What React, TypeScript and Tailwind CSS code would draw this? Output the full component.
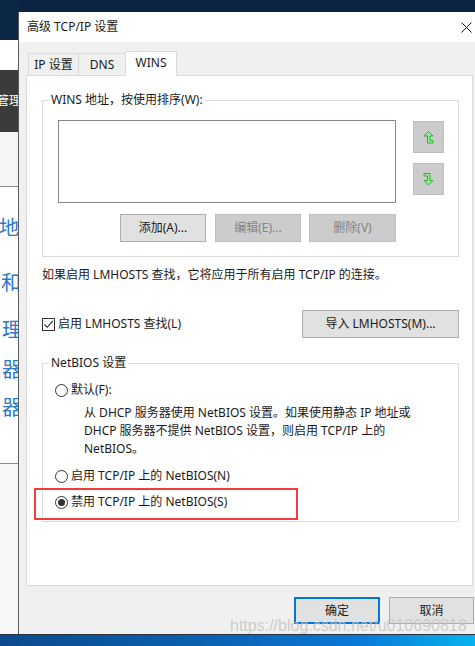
import React from "react";

const font = "font-['Noto_Sans','Noto_Sans_CJK_SC',sans-serif]";

function UpIcon() {
  return (
    <svg width="11" height="13" viewBox="0 0 11 13">
      <path d="M5.5 0.5 L10 5 H7 V9.5 H10 V12 H4.5 V5 H1 Z" fill="#9be89b" stroke="#34b034" strokeWidth="1" strokeLinejoin="miter" />
    </svg>
  );
}

function DownIcon() {
  return (
    <svg width="11" height="13" viewBox="0 0 11 13">
      <path d="M1 0.5 H7 V7.5 H10 L5.5 12 L1 7.5 H4.5 V3 H1 Z" fill="#9be89b" stroke="#34b034" strokeWidth="1" strokeLinejoin="miter" />
    </svg>
  );
}

function Radio({ checked }: { checked?: boolean }) {
  return (
    <span className="flex h-[13px] w-[13px] shrink-0 items-center justify-center rounded-full border border-[#333] bg-white">
      {checked && <span className="h-[7px] w-[7px] rounded-full bg-[#333]" />}
    </span>
  );
}

function Btn({ children, disabled, className = "" }: { children: React.ReactNode; disabled?: boolean; className?: string }) {
  return (
    <div
      className={`flex h-[28px] items-center justify-center border text-[12px] ${
        disabled ? "border-[#bfbfbf] bg-[#cccccc] text-[#838383]" : "border-[#adadad] bg-[#e1e1e1] text-[#1a1a1a]"
      } ${className}`}
    >
      {children}
    </div>
  );
}

function LeftStrip() {
  return (
    <div className="flex w-[18px] shrink-0 flex-col overflow-hidden">
      <div className="h-[40px] bg-[#0d2747]" />
      <div className="h-[30px] bg-white" />
      <div className="flex h-[62px] items-center justify-end bg-[#3b3b3b] text-[12px] whitespace-nowrap text-white">
        <span className="mr-[-3px]">管理</span>
      </div>
      <div className="h-[55px] border-b border-[#8c8c8c] bg-[#f5f5f5]" />
      <div className="flex h-[277px] flex-col border-b border-[#8c8c8c] bg-white pt-[29px] text-[20px] leading-[24px] whitespace-nowrap text-[#2a78c8]">
        <div className="flex h-[24px] justify-end"><span className="mr-[-1px]">地</span></div>
        <div className="mt-[31px] flex h-[24px] justify-end"><span className="mr-[-3px]">和</span></div>
        <div className="mt-[23px] flex h-[24px] justify-end"><span className="mr-[-4px]">理</span></div>
        <div className="mt-[16px] flex h-[24px] justify-end"><span className="mr-[-4px]">器</span></div>
        <div className="mt-[14px] flex h-[24px] justify-end"><span className="mr-[-4px]">器</span></div>
      </div>
      <div className="flex-1 bg-[#f7f7f7]" />
    </div>
  );
}

export default function App() {
  return (
    <div className={`${font} flex h-[646px] w-[475px] flex-col overflow-hidden bg-[#f0f0f0] text-[12px] text-[#1a1a1a]`}>
      <div className="flex min-h-0 flex-1">
        <LeftStrip />
        <div className="flex min-w-0 flex-1 flex-col">
          <div className="h-[12px] bg-[#0c2443]" />
          <div className="flex flex-1 flex-col border-l border-[#5b5b5b]">
            {/* title bar */}
            <div className="flex h-[30px] items-center justify-between bg-white pl-[8px] pr-[3px]">
              <span className="text-[12px] leading-[16px]">高级 TCP/IP 设置</span>
              <svg width="11" height="11" viewBox="0 0 11 11">
                <path d="M0.5 0.5 L10.5 10.5 M10.5 0.5 L0.5 10.5" stroke="#111" strokeWidth="1" />
              </svg>
            </div>

            {/* body */}
            <div className="relative flex flex-1 flex-col bg-[#f0f0f0] pl-[7px] pt-[9px]">
              {/* tabs */}
              <div className="flex h-[24px] items-end pl-[2px]">
                <div className="flex h-[22px] w-[50px] items-center justify-center border-t border-l border-[#d9d9d9] leading-[16px]">IP 设置</div>
                <div className="flex h-[22px] w-[47px] items-center justify-center border-t border-l border-[#d9d9d9] leading-[16px]">DNS</div>
                <div className="relative z-10 -mb-px flex h-[25px] w-[52px] items-center justify-center border-x border-t border-[#d9d9d9] bg-white pb-[3px] leading-[16px]">WINS</div>
              </div>

              {/* panel */}
              <div className="relative flex h-[511px] w-[447px] flex-col border border-[#d9d9d9] bg-white">
                <fieldset className="ml-[15px] mt-[16px] w-[417px] border border-[#dcdcdc] px-0 pb-[14px]">
                  <legend className="ml-[6px] px-[2px] leading-[16px]">WINS 地址，按使用排序(W):</legend>
                  <div className="mt-[12px] flex pl-[15px]">
                    <div className="h-[83px] w-[338px] border border-[#828790] bg-white" />
                    <div className="ml-[17px] flex flex-col gap-[10px] pt-px">
                      <div className="flex h-[32px] w-[31px] items-center justify-center border border-[#bfbfbf] bg-[#cccccc]">
                        <UpIcon />
                      </div>
                      <div className="flex h-[32px] w-[31px] items-center justify-center border border-[#bfbfbf] bg-[#cccccc]">
                        <DownIcon />
                      </div>
                    </div>
                  </div>
                  <div className="mt-[11px] flex w-[353px] justify-end pl-[15px]">
                    <Btn className="w-[86px]">添加(A)...</Btn>
                    <Btn disabled className="ml-[9px] w-[86px]">编辑(E)...</Btn>
                    <Btn disabled className="ml-[8px] w-[87px]">删除(V)</Btn>
                  </div>
                </fieldset>

                <div className="ml-[15px] mt-[10px] leading-[16px]">如果启用 LMHOSTS 查找，它将应用于所有启用 TCP/IP 的连接。</div>

                <div className="ml-[15px] mt-[27px] flex w-[417px] items-center justify-between">
                  <div className="flex items-center gap-[3px]">
                    <span className="flex h-[13px] w-[13px] items-center justify-center border border-[#333] bg-white">
                      <svg width="11" height="11" viewBox="0 0 11 11">
                        <path d="M1.5 5.5 L4.2 8.3 L9.8 1.8" fill="none" stroke="#222" strokeWidth="1.1" />
                      </svg>
                    </span>
                    <span className="leading-[16px]">启用 LMHOSTS 查找(L)</span>
                  </div>
                  <Btn className="w-[157px]">导入 LMHOSTS(M)...</Btn>
                </div>

                <fieldset className="ml-[15px] mt-[17px] w-[417px] border border-[#dcdcdc] px-0 pb-[10px]">
                  <legend className="ml-[6px] px-[2px] leading-[16px]">NetBIOS 设置</legend>
                  <div className="mt-[10px] flex flex-col pl-[12px]">
                    <div className="flex h-[18px] items-center gap-[3px]">
                      <Radio />
                      <span>默认(F):</span>
                    </div>
                    <div className="mt-[5px] pl-[29px] leading-[18px]">
                      <div>从 DHCP 服务器使用 NetBIOS 设置。如果使用静态 IP 地址或</div>
                      <div>DHCP 服务器不提供 NetBIOS 设置，则启用 TCP/IP 上的</div>
                      <div>NetBIOS。</div>
                    </div>
                    <div className="mt-[9px] flex h-[18px] items-center gap-[3px]">
                      <Radio />
                      <span>启用 TCP/IP 上的 NetBIOS(N)</span>
                    </div>
                    <div className="mt-[8px] flex h-[18px] items-center gap-[3px]">
                      <Radio checked />
                      <span>禁用 TCP/IP 上的 NetBIOS(S)</span>
                    </div>
                  </div>
                </fieldset>

                <div className="absolute left-[7px] top-[412px] h-[32px] w-[264px] border-2 border-[#f23c3c]" />
              </div>

              {/* footer buttons */}
              <div className="mt-[11px] flex justify-end pr-[1px]">
                <div className="flex h-[27px] w-[86px] items-center justify-center border-2 border-[#0078d7] bg-[#e1e1e1]">确定</div>
                <div className="ml-[9px] flex h-[27px] w-[85px] items-center justify-center border border-[#adadad] bg-[#e1e1e1]">取消</div>
              </div>

              <div className="pointer-events-none absolute bottom-0 left-[211px] font-['Liberation_Sans',sans-serif] text-[16px] leading-[16px] text-[rgba(195,195,195,0.8)]">
                https://blog.csdn.net/u010690818
              </div>
            </div>
          </div>
        </div>
      </div>
      <div className="h-[12px] border-t border-[#2a3340] bg-[linear-gradient(90deg,#0b4a8c_0%,#0a5fae_40%,#0a78d6_75%,#08b2ee_100%)]" />
    </div>
  );
}
